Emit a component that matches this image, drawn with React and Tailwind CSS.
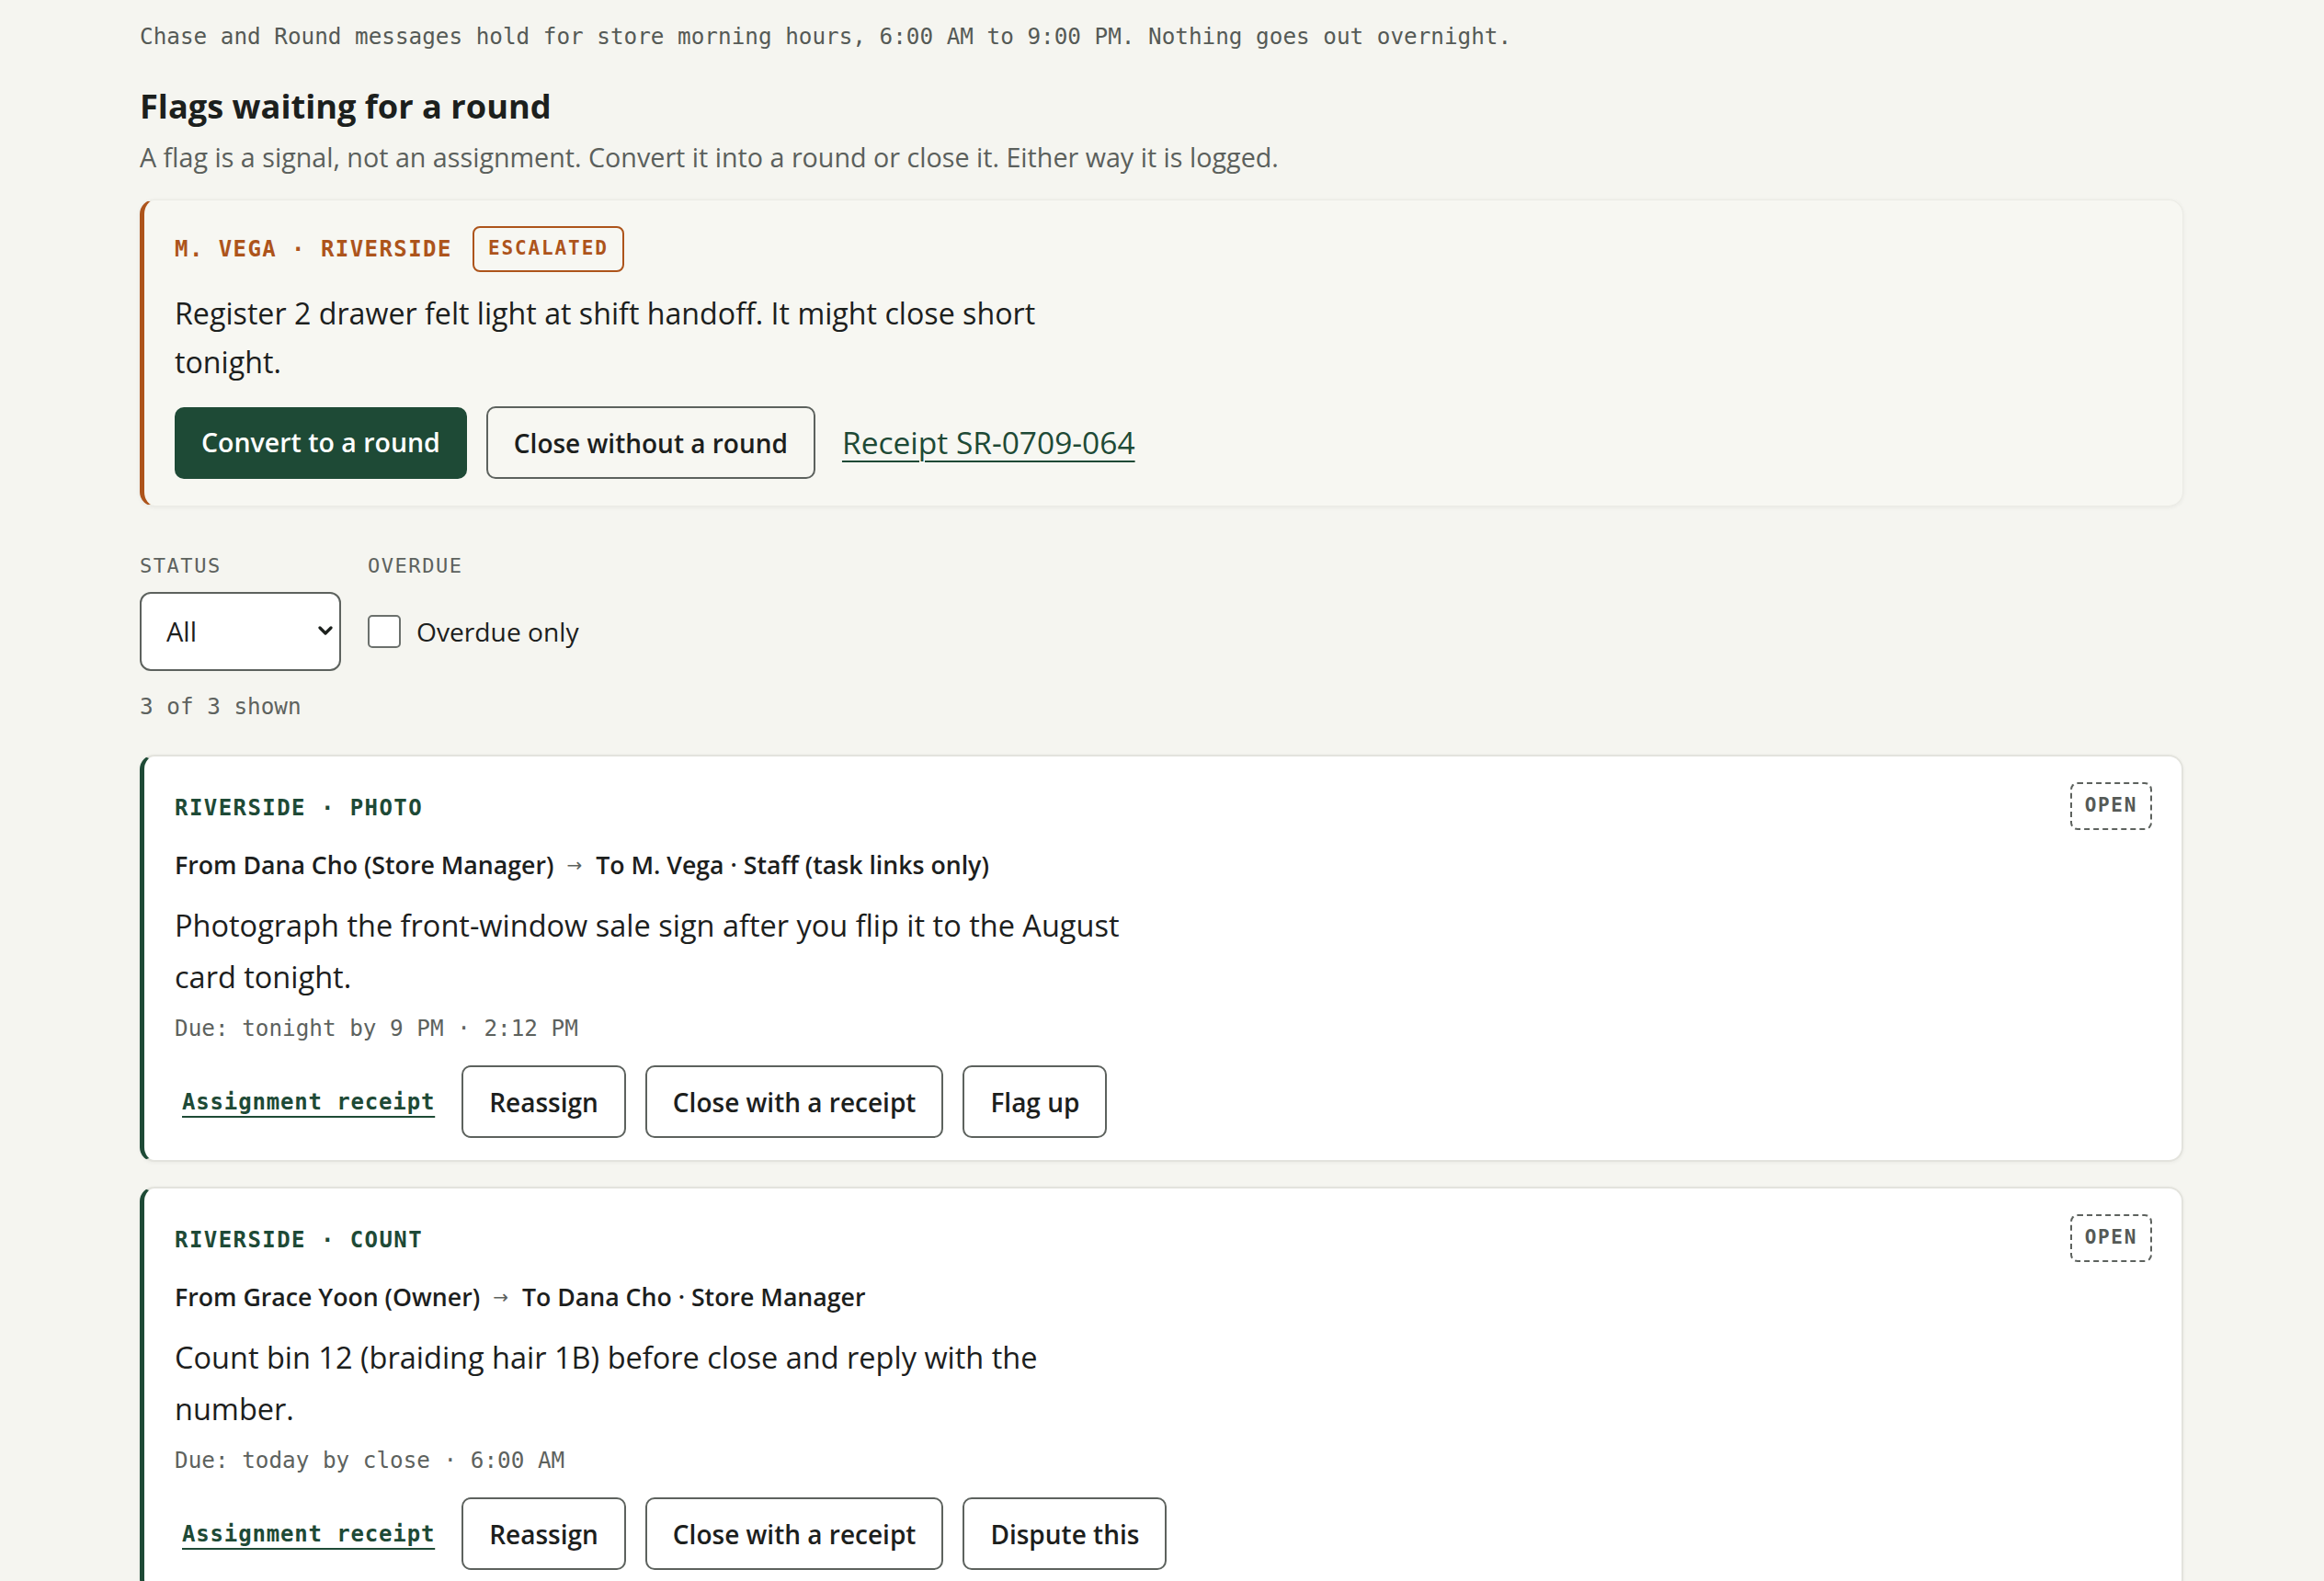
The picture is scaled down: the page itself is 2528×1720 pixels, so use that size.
import React, { useState } from 'react';

const MONO = "font-['DejaVu_Sans_Mono',monospace]";

const tasks = [
    {
        id: 't1',
        tag: 'RIVERSIDE · PHOTO',
        from: 'From Dana Cho (Store Manager)',
        to: 'To M. Vega · Staff (task links only)',
        body: 'Photograph the front-window sale sign after you flip it to the August card tonight.',
        due: 'Due: tonight by 9 PM · 2:12 PM',
        last: 'Flag up',
    },
    {
        id: 't2',
        tag: 'RIVERSIDE · COUNT',
        from: 'From Grace Yoon (Owner)',
        to: 'To Dana Cho · Store Manager',
        body: 'Count bin 12 (braiding hair 1B) before close and reply with the number.',
        due: 'Due: today by close · 6:00 AM',
        last: 'Dispute this',
    },
];

const OutlineButton = ({ children }) => (
    <button className="h-[79px] px-[28px] rounded-[10px] border-2 border-[#5d625e] bg-transparent text-[28px] font-semibold text-[#1c201d]">
        {children}
    </button>
);

const TaskCard = ({ task }) => (
    <div className="rounded-[16px] border-2 border-[#e3e3dd] border-l-[5px] border-l-[#1e4a36] bg-white shadow-[0_1px_4px_rgba(0,0,0,0.05)] pt-[28px] pb-[24px] pl-[33px] pr-[32px]">
        <div className="flex items-center justify-between h-[52px]">
            <span className={`${MONO} pt-[4px] text-[24px] font-bold tracking-[0.06em] text-[#1e4a36]`}>{task.tag}</span>
            <span className={`${MONO} h-[52px] flex items-center px-[14px] rounded-[8px] border-2 border-dashed border-[#5d625e] text-[21px] font-bold tracking-[0.08em] text-[#555a56]`}>
                OPEN
            </span>
        </div>
        <p className="mt-[18px] flex items-center text-[26.7px] leading-[40px] font-semibold text-[#1c201d]">
            <span>{task.from}</span>
            <span className="ml-[14px] mr-[15px] font-['DejaVu_Sans',sans-serif] text-[20px] font-normal text-[#5d625e]">→</span>
            <span>{task.to}</span>
        </p>
        <p className="mt-[18px] max-w-[1046px] text-[32.5px] leading-[56px] text-[#1c201d]">{task.body}</p>
        <p className={`${MONO} mt-[10px] text-[24.3px] leading-[36px] text-[#5d625e]`}>{task.due}</p>
        <div className="mt-[22px] flex items-center gap-[21px]">
            <a href="#" className={`${MONO} px-[8px] text-[24px] font-bold tracking-[0.035em] text-[#1e4a36] underline decoration-2 underline-offset-[7px]`}>
                Assignment receipt
            </a>
            <OutlineButton>Reassign</OutlineButton>
            <OutlineButton>Close with a receipt</OutlineButton>
            <OutlineButton>{task.last}</OutlineButton>
        </div>
    </div>
);

export default function App() {
    const [status, setStatus] = useState('all');
    const [overdueOnly, setOverdueOnly] = useState(false);

    return (
        <div className="min-h-screen bg-[#f5f5f0] font-['Open_Sans',sans-serif] text-[#1c201d]">
            <div className="pl-[152px] pr-[153px] pt-[22px] pb-[40px]">
                <p className={`${MONO} text-[24.3px] leading-[36px] text-[#555a56]`}>
                    Chase and Round messages hold for store morning hours, 6:00 AM to 9:00 PM. Nothing goes out overnight.
                </p>

                <h2 className="mt-[33px] text-[36.2px] leading-[49px] font-bold text-[#1c201d]">Flags waiting for a round</h2>
                <p className="mt-[9px] text-[28.7px] leading-[43px] text-[#5b605c]">
                    A flag is a signal, not an assignment. Convert it into a round or close it. Either way it is logged.
                </p>

                {/* escalated flag */}
                <div className="mt-[25px] rounded-[16px] border border-[#ebebe5] border-l-[5px] border-l-[#ad541b] bg-[#f7f7f2] shadow-[0_1px_5px_rgba(0,0,0,0.06)] pt-[28px] pb-[29px] pl-[33px] pr-[33px]">
                    <div className="flex items-center gap-[22px] h-[50px]">
                        <span className={`${MONO} text-[24px] font-bold tracking-[0.06em] text-[#ad541b]`}>M. VEGA · RIVERSIDE</span>
                        <span className={`${MONO} h-[50px] flex items-center px-[15px] rounded-[8px] border-2 border-[#ad541b] text-[21px] font-bold tracking-[0.09em] text-[#ad541b]`}>
                            ESCALATED
                        </span>
                    </div>
                    <p className="mt-[18px] max-w-[1046px] text-[32.2px] leading-[53px] text-[#1c201d]">
                        Register 2 drawer felt light at shift handoff. It might close short tonight.
                    </p>
                    <div className="mt-[22px] flex items-center gap-[21px]">
                        <button className="h-[78px] px-[29px] rounded-[10px] bg-[#1e4a36] text-[28.5px] font-semibold text-white">
                            Convert to a round
                        </button>
                        <OutlineButton>Close without a round</OutlineButton>
                        <a href="#" className="px-[8px] text-[33.5px] font-normal text-[#1e4a36] underline decoration-2 underline-offset-[7px]">
                            Receipt SR-0709-064
                        </a>
                    </div>
                </div>

                {/* filters */}
                <div className="mt-[50px] flex gap-[29px]">
                    <div>
                        <label className={`${MONO} block text-[22px] leading-[30px] tracking-[0.07em] text-[#5d625e]`}>STATUS</label>
                        <div className="relative mt-[13px] w-[219px] h-[86px]">
                            <select
                                value={status}
                                onChange={(e) => setStatus(e.target.value)}
                                className="appearance-none w-full h-full rounded-[12px] border-2 border-[#5d625e] bg-white pl-[27px] text-[29px] text-[#1c201d]"
                            >
                                <option value="all">All</option>
                                <option value="open">Open</option>
                                <option value="closed">Closed</option>
                            </select>
                            <svg className="pointer-events-none absolute right-[9px] top-[36px]" width="16" height="12" viewBox="0 0 16 12">
                                <polyline points="2,3 8,9 14,3" fill="none" stroke="#1c201d" strokeWidth="3.2" strokeLinecap="round" strokeLinejoin="round" />
                            </svg>
                        </div>
                    </div>
                    <div>
                        <label className={`${MONO} block text-[22px] leading-[30px] tracking-[0.07em] text-[#5d625e]`}>OVERDUE</label>
                        <label className="mt-[13px] h-[86px] flex items-center gap-[17px] text-[28.2px] text-[#1c201d]">
                            <input
                                type="checkbox"
                                checked={overdueOnly}
                                onChange={(e) => setOverdueOnly(e.target.checked)}
                                className="appearance-none w-[36px] h-[36px] rounded-[5px] border-2 border-[#6b706c] bg-white"
                            />
                            Overdue only
                        </label>
                    </div>
                </div>

                <p className={`${MONO} mt-[21px] text-[24.3px] leading-[36px] text-[#5d625e]`}>3 of 3 shown</p>

                <div className="mt-[34px] flex flex-col gap-[27px]">
                    {tasks.map((t) => (
                        <TaskCard key={t.id} task={t} />
                    ))}
                </div>
            </div>
        </div>
    );
}
